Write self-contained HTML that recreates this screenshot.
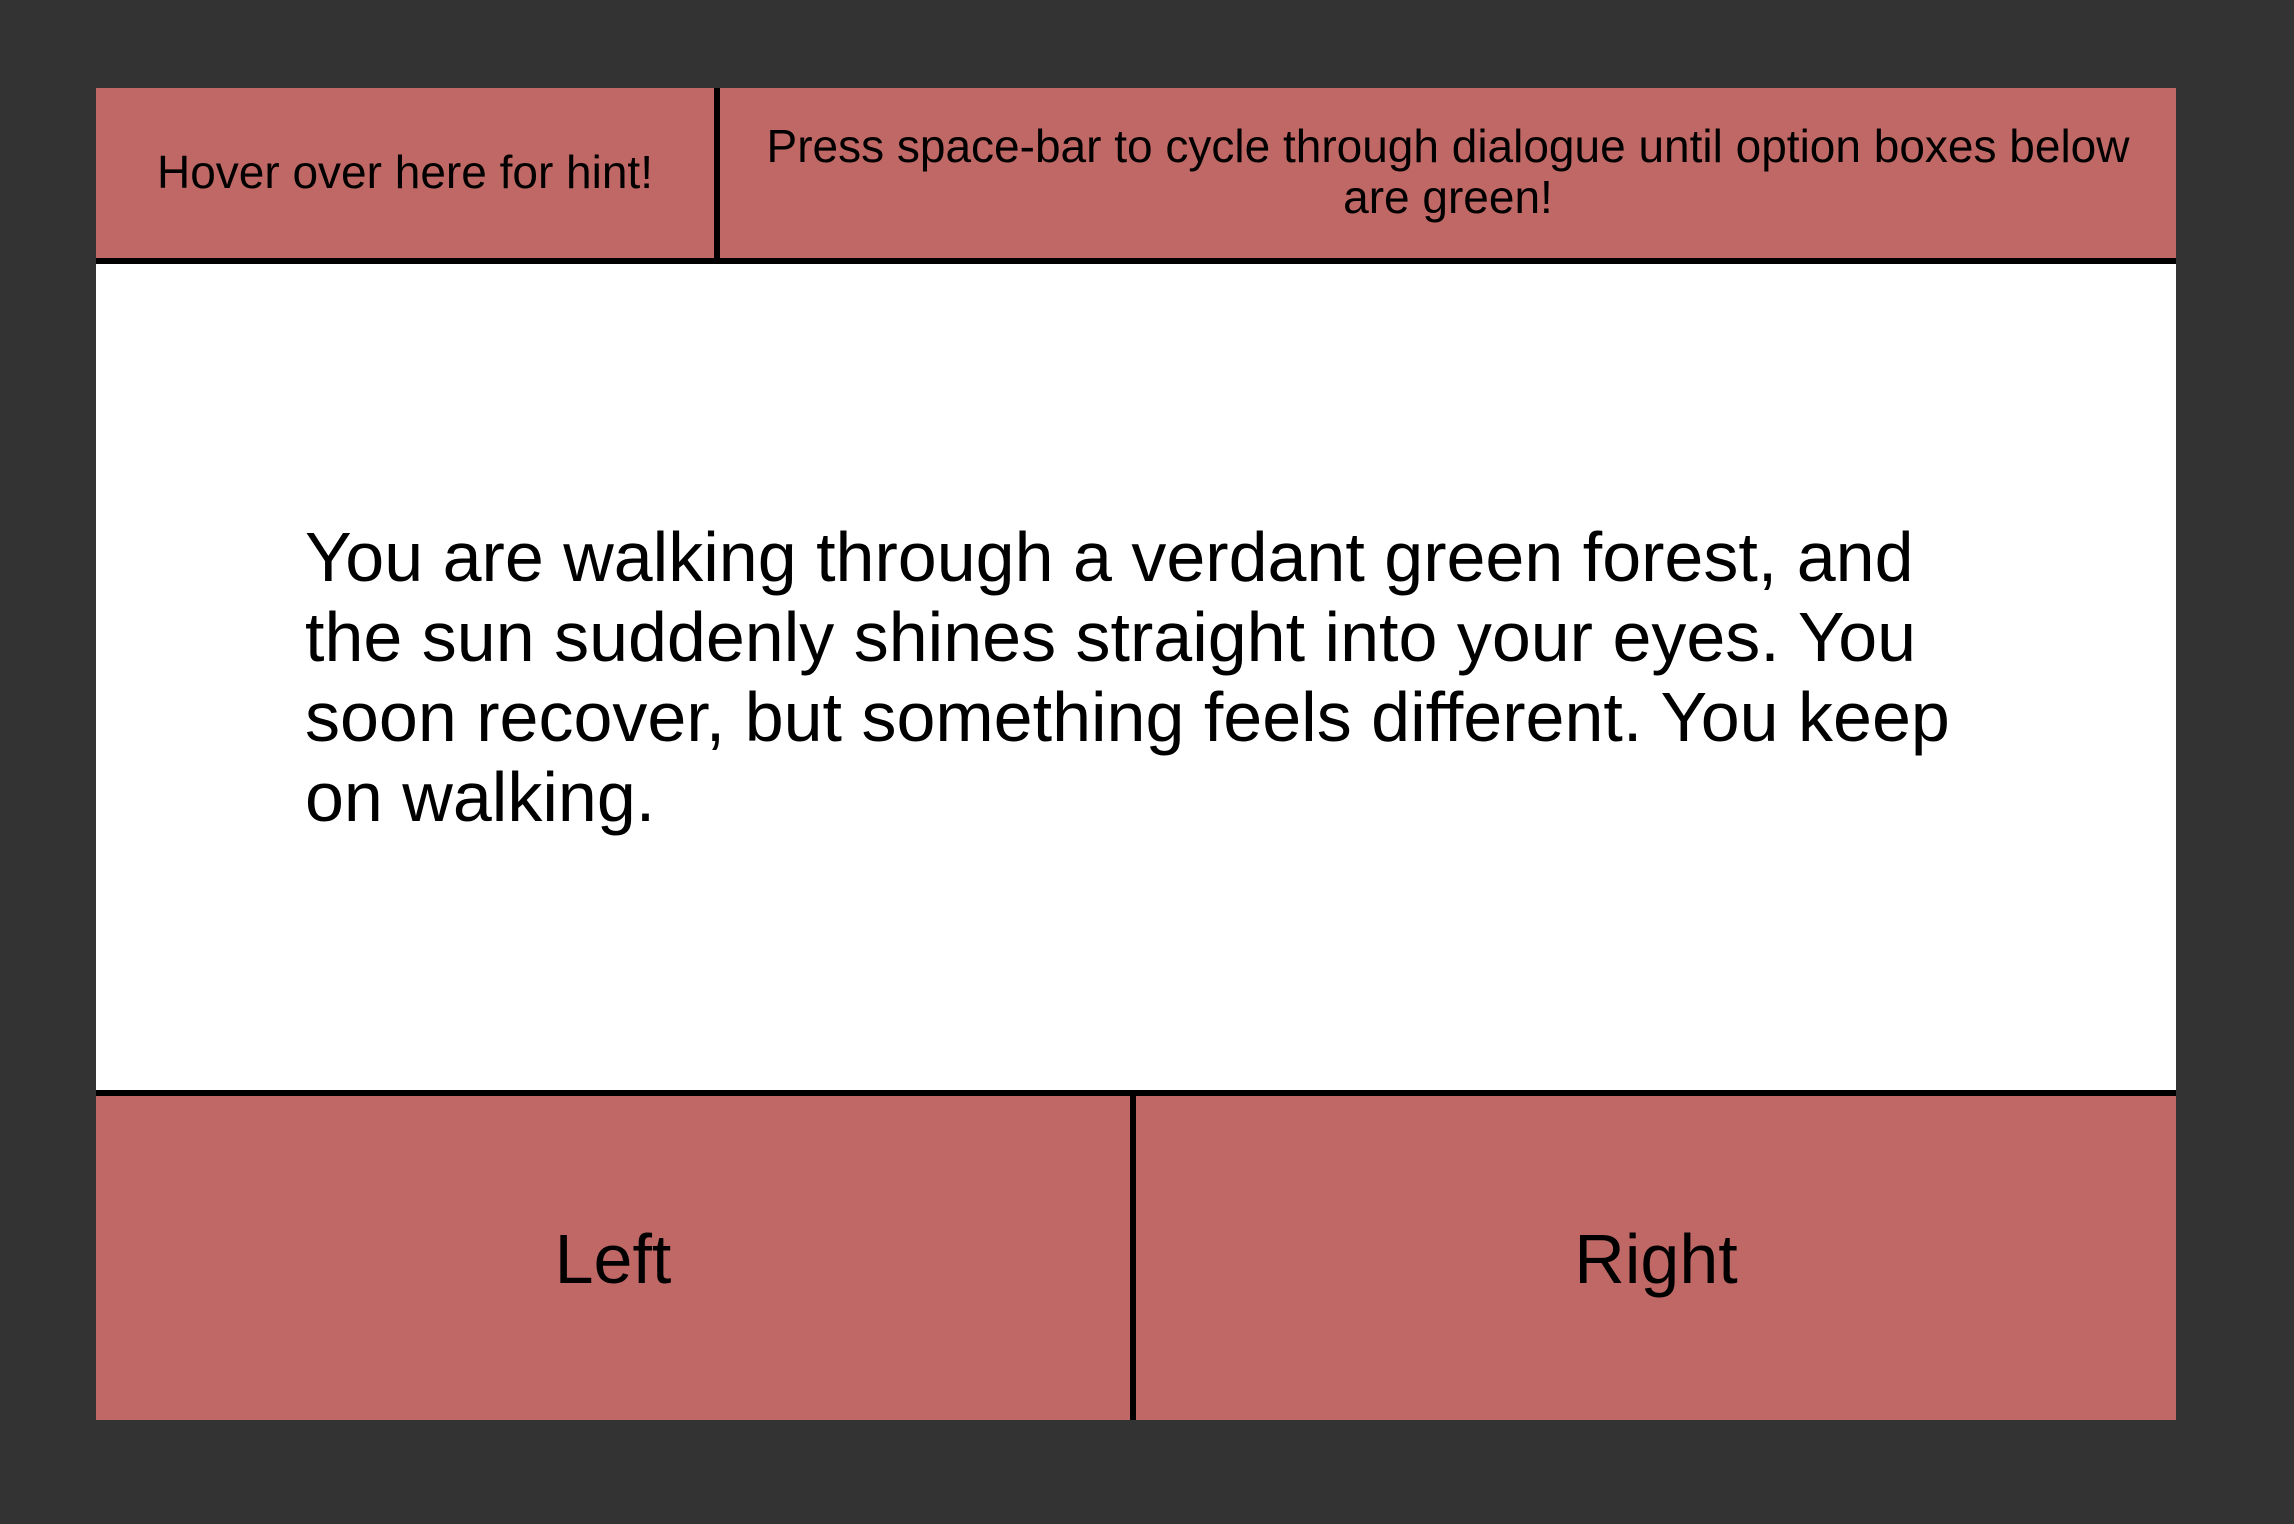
<!DOCTYPE html>
<html><head><meta charset="utf-8"><style>
html,body{margin:0;padding:0;}
body{width:2294px;height:1524px;background:#333333;position:relative;overflow:hidden;font-family:"Liberation Sans",Arial,sans-serif;color:#000;}
.b{position:absolute;}
.red{background:#c06865;}
.t{position:absolute;white-space:nowrap;text-align:center;}
</style></head><body>
<div class="b red" style="left:96px;top:88px;width:2080px;height:170px;"></div>
<div class="b" style="left:96px;top:258px;width:2080px;height:6px;background:#000;"></div>
<div class="b" style="left:714px;top:88px;width:6px;height:172px;background:#000;"></div>
<div class="b" style="left:96px;top:264px;width:2080px;height:826px;background:#fff;"></div>
<div class="b" style="left:96px;top:1090px;width:2080px;height:6px;background:#000;"></div>
<div class="b red" style="left:96px;top:1096px;width:2080px;height:324px;"></div>
<div class="b" style="left:1130px;top:1096px;width:6px;height:324px;background:#000;"></div>

<div class="t" style="left:96px;width:618px;top:147px;font-size:46px;line-height:51px;">Hover over here for hint!</div>
<div class="t" style="left:720px;width:1456px;top:121px;font-size:46px;line-height:51px;">Press space-bar to cycle through dialogue until option boxes below<br>are green!</div>

<div class="t" style="left:305px;top:517px;font-size:70px;line-height:80px;text-align:left;">You are walking through a verdant green forest, and<br>the sun suddenly shines straight into your eyes. You<br>soon recover, but something feels different. You keep<br>on walking.</div>

<div class="t" style="left:96px;width:1034px;top:1219px;font-size:70px;line-height:80px;">Left</div>
<div class="t" style="left:1136px;width:1040px;top:1219px;font-size:70px;line-height:80px;">Right</div>
</body></html>
